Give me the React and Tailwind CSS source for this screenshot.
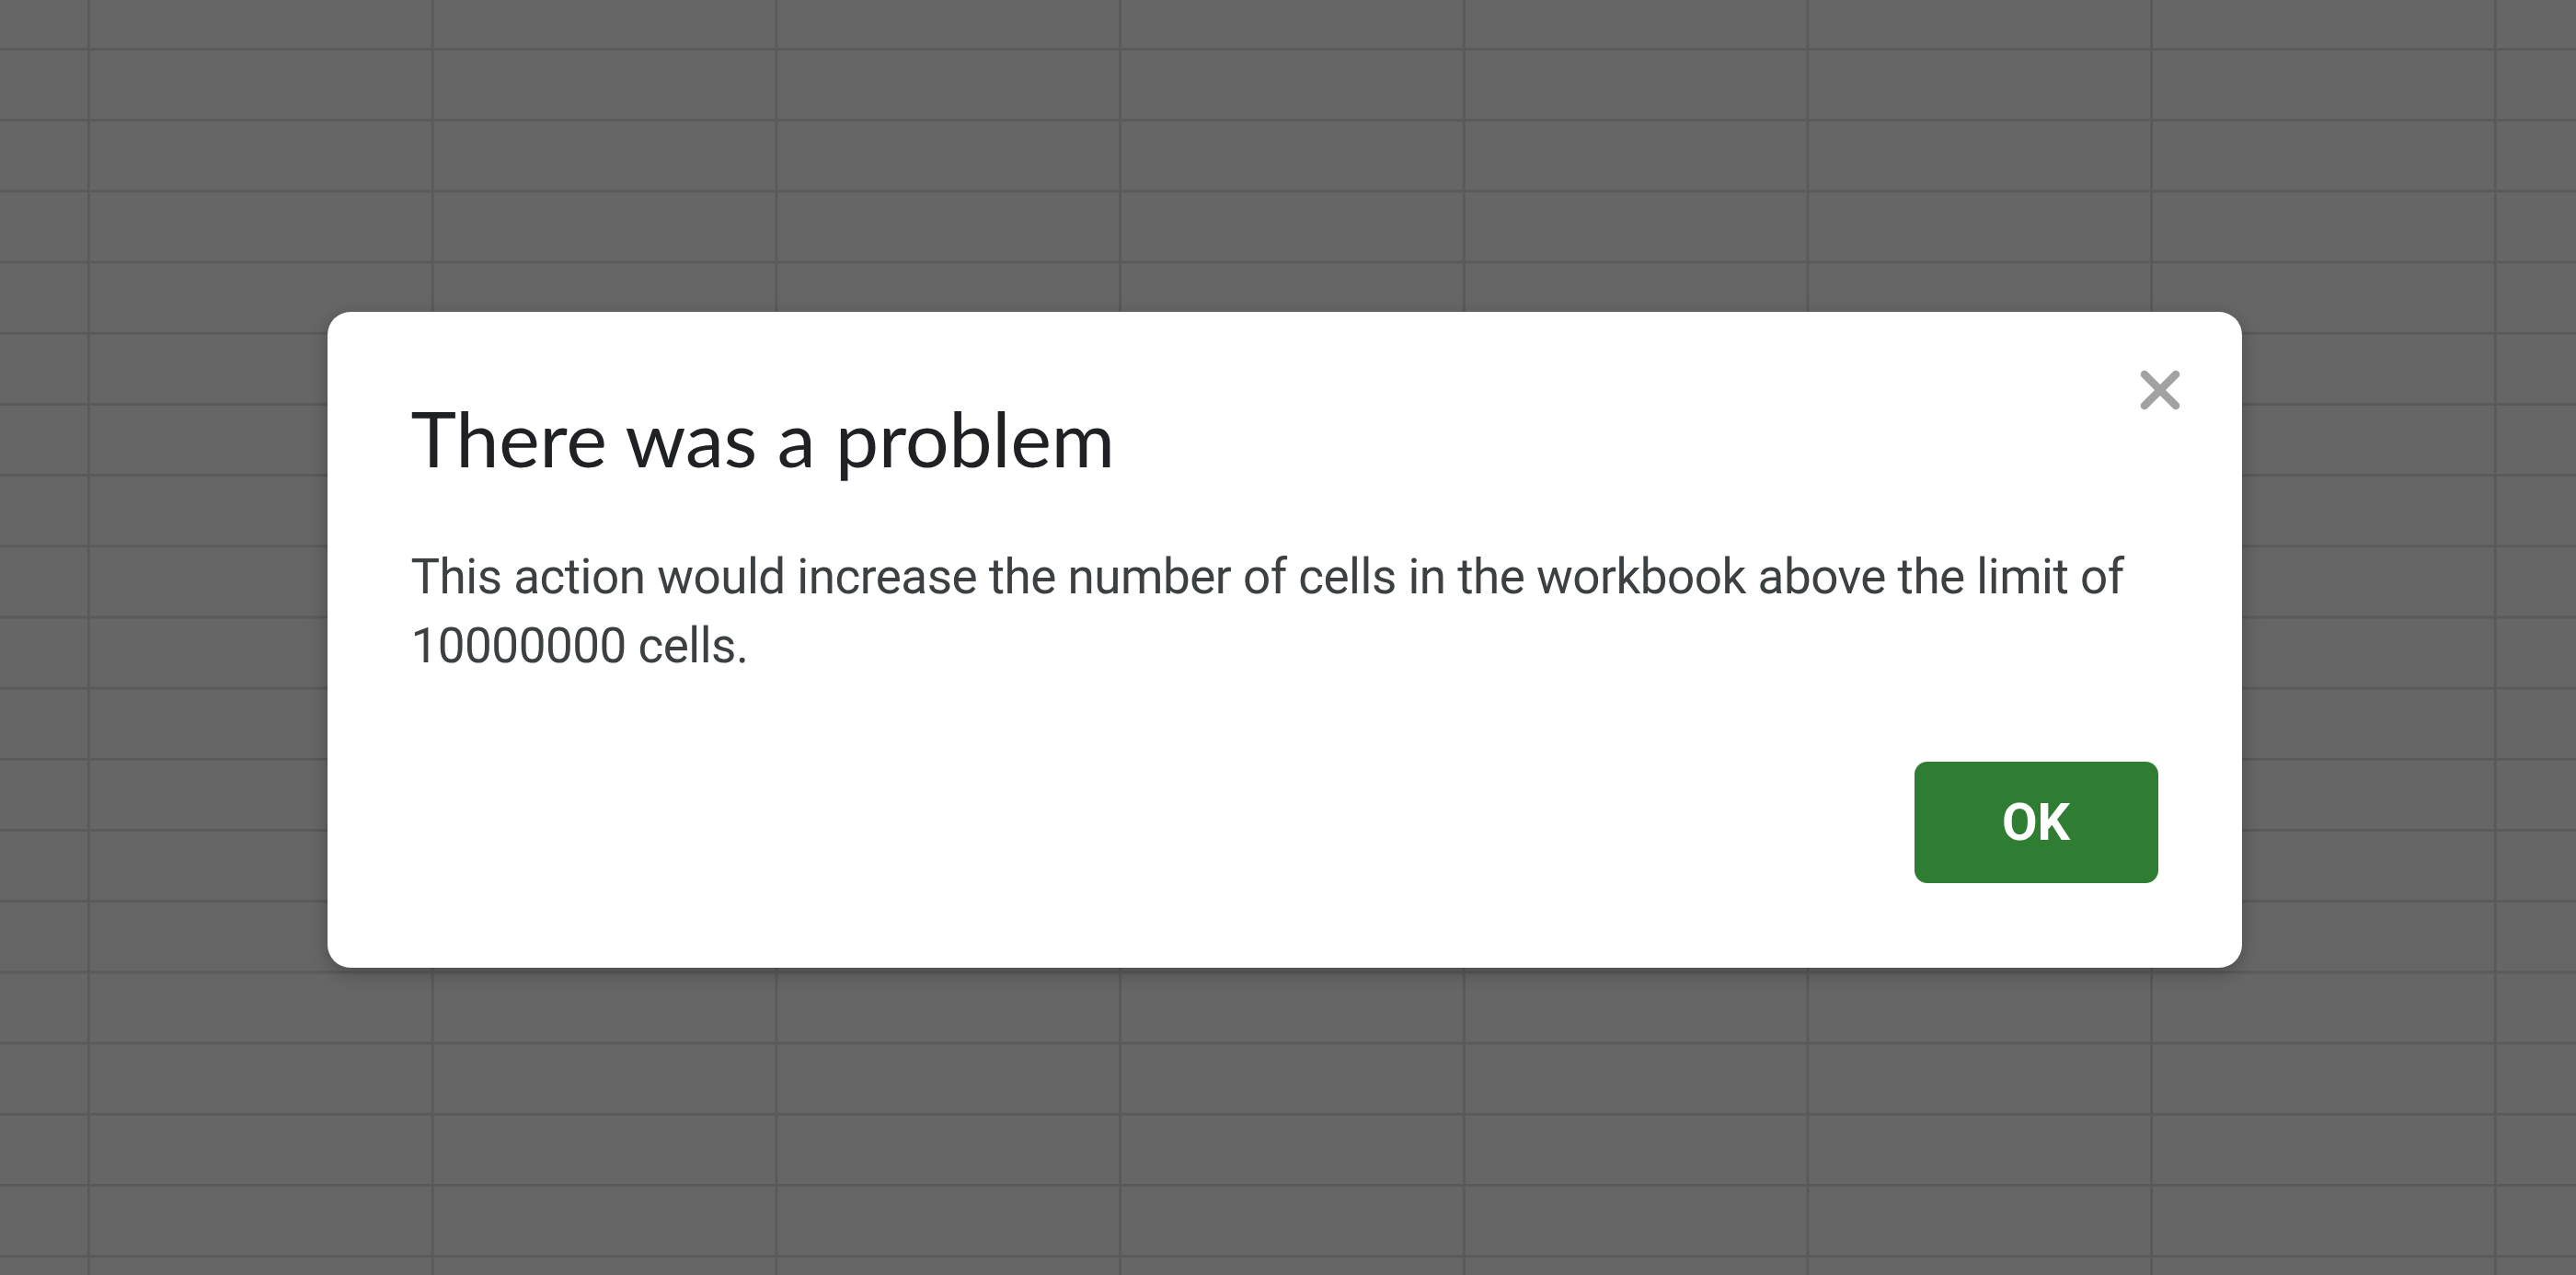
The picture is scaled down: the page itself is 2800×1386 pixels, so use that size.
const ErrorDialog = () => (
  <div className="relative mr-[8px] mt-[4px] w-[2081px] bg-white rounded-[25px] shadow-[0_6px_20px_rgba(0,0,0,0.25)] px-[91px] pt-[87px] pb-[92px]">
    <button className="absolute top-[51px] right-[55px] w-[68px] h-[68px] flex items-center justify-center">
      <svg width="68" height="68" viewBox="0 0 68 68">
        <path d="M17 17 L51 51 M51 17 L17 51" stroke="#a2a2a2" strokeWidth="8.5" strokeLinecap="round" />
      </svg>
    </button>

    <h2 className="text-[84px] leading-[100px] text-[#202124] font-['Lato',sans-serif]">
      There was a problem
    </h2>

    <p className="mt-[64px] text-[53px] leading-[75px] text-[#3c4043] font-['Roboto',sans-serif] tracking-[-0.5px]">
      This action would increase the number of cells in the workbook above the limit of 10000000 cells.
    </p>

    <div className="flex justify-end mt-[88px]">
      <button className="w-[265px] h-[132px] rounded-[14px] bg-[#2e7d32] text-white text-[56px] font-bold font-['Roboto',sans-serif] flex items-center justify-center">
        OK
      </button>
    </div>
  </div>
);

export default function App() {
  return (
    <div className="w-full h-[1386px] overflow-hidden flex items-center justify-center bg-[#666666] bg-[linear-gradient(to_right,#5a5a5a_0_3px,transparent_3px),linear-gradient(to_bottom,#5a5a5a_0_3px,transparent_3px)] bg-[length:373.7px_100%,100%_77.2px] bg-[position:95px_0,0_52px]">
      <ErrorDialog />
    </div>
  );
}
